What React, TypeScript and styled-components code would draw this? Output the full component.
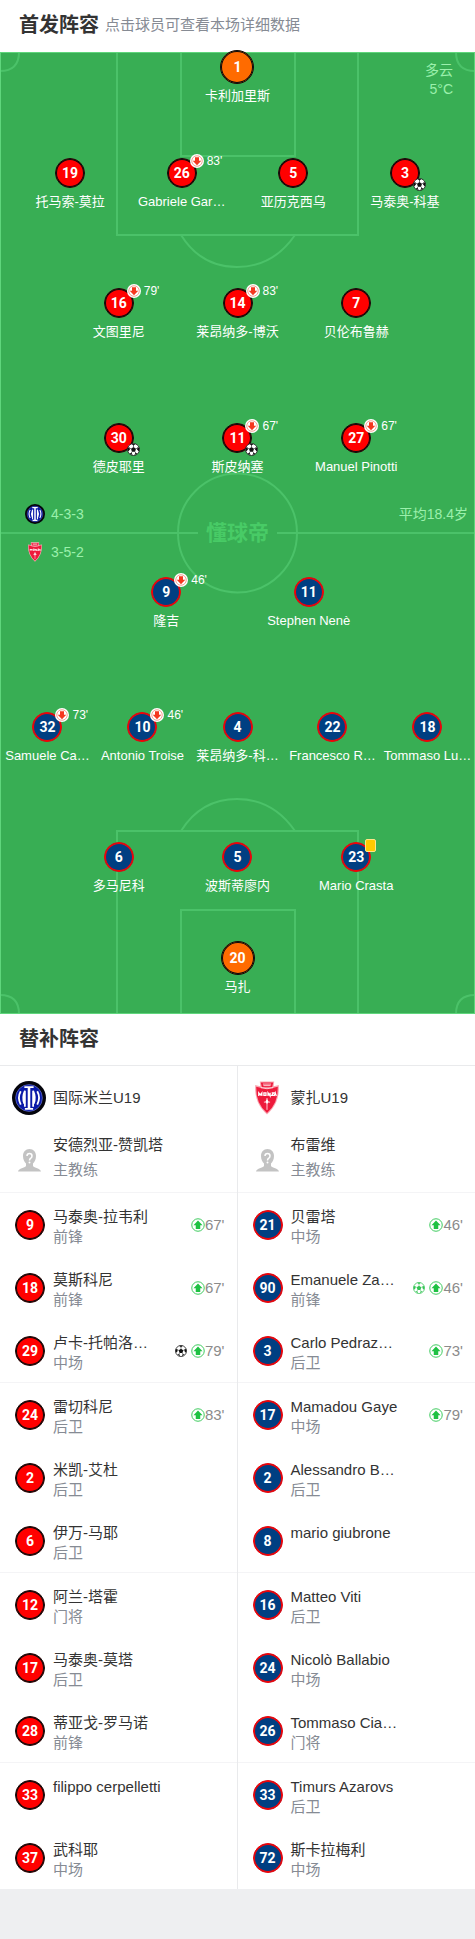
import React from 'react';
import styled, { createGlobalStyle, css } from 'styled-components';

const Global = createGlobalStyle`
  *, *::before, *::after { box-sizing: border-box; }
  body {
    margin: 0;
    background: #eeeff1;
    font-family: "Liberation Sans", "Noto Sans CJK SC", sans-serif;
    color: #333;
  }
  h2, p, ul { margin: 0; padding: 0; }
  ul { list-style: none; }
`;

type Kit = 'keeper' | 'home' | 'away';
type Player = {
  no: number;
  name: string;
  kit: Kit;
  off?: string;
  goal?: boolean;
  card?: boolean;
};
type Sub = {
  no: number;
  name: string;
  role?: string;
  on?: string;
  goal?: 'black' | 'green';
};

const kits: Record<Kit, { fill: string; line: string }> = {
  keeper: { fill: '#ff6b00', line: '#0b0b0b' },
  home: { fill: '#ff0000', line: '#0b0b0b' },
  away: { fill: '#003f82', line: '#ff0000' },
};

/* ---------- layout ---------- */

const Page = styled.main`
  width: 100%;
  padding-bottom: 50px;
`;

const Header = styled.header<{ $line?: boolean }>`
  display: flex;
  align-items: center;
  gap: 6px;
  height: 52px;
  padding: 0 19px 2px;
  background: #fff;
  border-bottom: ${(p) => (p.$line ? '1px solid #e9eaec' : '0')};
`;

const Title = styled.h2`
  font-size: 20px;
  line-height: 28px;
  font-weight: 700;
`;

const Hint = styled.span`
  font-size: 15px;
  line-height: 20px;
  color: #868b94;
`;

const Pitch = styled.section`
  position: relative;
  padding-bottom: 19px;
  background: #38ae54;
`;

const Markings = styled.svg`
  position: absolute;
  inset: 0;
  width: 100%;
  height: 100%;
`;

const Weather = styled.div`
  position: absolute;
  top: 9px;
  right: 22px;
  font-size: 14px;
  line-height: 19px;
  text-align: right;
  color: #9bf0ac;
`;

const Lines = styled.div`
  position: relative;
  display: flex;
  flex-direction: column;
`;

const Line = styled.ul<{ $count: number; $inset: string; $gap: number }>`
  display: grid;
  grid-template-columns: repeat(${(p) => p.$count}, minmax(0, 1fr));
  padding: 0 ${(p) => p.$inset};
  margin-top: ${(p) => p.$gap}px;
`;

const Spot = styled.li`
  display: flex;
  justify-content: center;
`;

const PlayerButton = styled.button`
  display: flex;
  flex-direction: column;
  align-items: center;
  gap: 6px;
  padding: 0;
  border: 0;
  background: none;
  font: inherit;
  color: #fff;
  cursor: pointer;
`;

const PlayerName = styled.span`
  font-size: 13px;
  line-height: 16px;
  white-space: nowrap;
`;

const ShirtWrap = styled.span`
  position: relative;
  flex: none;
`;

const Shirt = styled.span<{ $kit: Kit }>`
  display: flex;
  align-items: center;
  justify-content: center;
  width: 30px;
  height: 30px;
  border-radius: 50%;
  border: 1px solid ${(p) => kits[p.$kit].line};
  box-shadow: inset 0 0 0 1px ${(p) => kits[p.$kit].line};
  background: ${(p) => kits[p.$kit].fill};
  font-family: Roboto, "Liberation Sans", sans-serif;
  font-size: 14px;
  line-height: 16px;
  font-weight: 700;
  color: #fff;
  ${(p) =>
    p.$kit === 'keeper' &&
    css`
      width: 34px;
      height: 34px;
      margin-bottom: -2px;
    `}
`;

const OffBadge = styled.span`
  position: absolute;
  left: 23px;
  top: -4px;
  display: flex;
  align-items: center;
  gap: 3px;
  font-size: 12px;
  line-height: 14px;
`;

const GoalBadge = styled.span`
  position: absolute;
  left: 23px;
  top: 20px;
  display: flex;
`;

const CardBadge = styled.span`
  position: absolute;
  left: 24px;
  top: -3px;
  width: 11px;
  height: 13px;
  border: 1px solid #ffe58a;
  border-radius: 2px;
  background: #ffca00;
`;

const Midfield = styled.div`
  display: grid;
  grid-template-columns: 1fr auto 1fr;
  align-items: start;
  padding: 29px 7px 0 25px;
  margin-bottom: 15px;
  font-size: 14px;
  line-height: 20px;
  color: #9bf0ac;
`;

const Formations = styled.div`
  display: flex;
  flex-direction: column;
  gap: 18px;
`;

const Formation = styled.div`
  display: flex;
  align-items: center;
  gap: 6px;
`;

const Brand = styled.strong`
  align-self: center;
  margin-right: 18px;
  font-size: 21px;
  line-height: 30px;
  color: #48cb66;
`;

const Age = styled.span`
  text-align: right;
`;

const Bench = styled.section`
  display: grid;
  grid-template-columns: repeat(2, minmax(0, 1fr));
  background: #fff;
`;

const Team = styled.div`
  &:first-child {
    border-right: 1px solid #e9eaec;
  }
`;

const TeamHead = styled.div`
  display: flex;
  align-items: center;
  gap: 7px;
  height: 63px;
  padding-left: 12px;
  font-size: 15px;
  line-height: 20px;
`;

const Coach = styled.div`
  display: flex;
  gap: 11px;
  height: 64px;
  padding: 3px 0 0 17px;
  border-bottom: 1px solid #f4f4f6;
  font-size: 15px;
  line-height: 25px;

  svg { margin-top: 16px; }
`;

const Role = styled.p`
  color: #868b94;
`;

const SubRow = styled.li`
  display: flex;
  align-items: center;
  gap: 8px;
  height: 63px;
  padding: 0 12px 0 15px;
  font-size: 15px;
  line-height: 20px;

  &:nth-child(3n) {
    height: 64px;
    border-bottom: 1px solid #f4f4f6;
  }
`;

const SubText = styled.div`
  flex: 1;
  min-width: 0;
  height: 40px;
  margin-top: 4px;
  white-space: nowrap;
`;

const SubEvents = styled.span`
  display: flex;
  align-items: center;
  color: #8b8b8b;

  svg + svg { margin-left: 4px; }
`;

/* ---------- drawings ---------- */

const Ball = ({ size, color = '#111' }: { size: number; color?: string }) => (
  <svg width={size} height={size} viewBox="0 0 26 26" aria-hidden="true">
    <circle cx="13" cy="13" r="12" fill="#fff" stroke={color} strokeWidth="1.6" />
    <path
      fill={color}
      d="M13 8l5 3.6-1.9 5.9H9.9L8 11.6zM9 1.8h8L13 5zM1.2 10.5L4.2 8l1.8 5-3.8 4zM24.8 10.5L21.8 8 20 13l3.8 4zM5 20.5l4.5-.5 1.5 4.5zM21 20.5l-4.5-.5-1.5 4.5z"
    />
    <path
      stroke={color}
      strokeWidth="1.2"
      d="M13 8V4M18 11.6l4-2M16 17.5l2.5 4M10 17.5l-2.5 4M8 11.6l-4-2"
    />
  </svg>
);

const OffIcon = () => (
  <svg width="14" height="14" viewBox="0 0 28 28" aria-hidden="true">
    <circle cx="14" cy="14" r="14" fill="#fff" />
    <circle cx="14" cy="14" r="10.5" fill="none" stroke="#f58a78" strokeWidth="1.6" />
    <path fill="#f5371f" d="M10 6.500h8v7h4.500L14 22.500 5.500 13.500H10z" />
  </svg>
);

const OnIcon = () => (
  <svg width="14" height="14" viewBox="0 0 28 28" aria-hidden="true">
    <circle cx="14" cy="14" r="12.500" fill="#fff" stroke="#3fcb5f" strokeWidth="2" />
    <path fill="#1fc143" d="M9.500 22h9v-7.500H23L14 5l-9 9.500h4.500z" />
  </svg>
);

const InterCrest = ({ size }: { size: number }) => (
  <svg width={size} height={size} viewBox="0 0 66 66" aria-hidden="true">
    <circle cx="33" cy="33" r="33" fill="#04040c" />
    <circle cx="33" cy="33" r="26" fill="#0a1aa8" stroke="#8d97e0" strokeWidth="1" />
    <g fill="none" stroke="#fff">
      <path strokeWidth="5" d="M33 13v40" />
      <path strokeWidth="3.5" d="M24 12h18M25 54h16" />
      <path strokeWidth="3.5" d="M17 20q-7 12 0 26M49 20q7 12 0 26" />
      <path strokeWidth="3.5" d="M25 50V19q-6 13-1 25M41 50V19q6 13 1 25" />
    </g>
  </svg>
);

const MonzaCrest = ({ size }: { size: number }) => (
  <svg width={size} height={size} viewBox="0 0 66 66" aria-hidden="true">
    <path fill="#f9a9b4" d="M19 1h28l-1 9 10-2q2 36-23 57Q8 44 10 8l10 2z" />
    <path fill="#ee1a3b" d="M21 3h24l-2 9H23z" />
    <path fill="#ee1a3b" d="M12 11q21 6 42 0 1 32-21 51Q11 43 12 11z" />
    <path stroke="#fff" strokeWidth="1.5" fill="none" d="M25 6h16M26 9h14M21 13q12 4 24 0" />
    <path
      stroke="#fff"
      strokeWidth="2.5"
      fill="none"
      d="M17 29v-6l3 4 3-4v6M27 23h4v5h-4zM35 29v-6l4 6v-6M42 23h4l-4 5h4M47 29l2-6 2 6"
    />
    <path stroke="#fff" strokeWidth="1.5" fill="none" d="M33 33v23M27 41h12" />
    <path fill="#fff" d="M33 35l3 5-3 5-3-5z" />
  </svg>
);

const CoachIcon = () => (
  <svg width="25" height="25" viewBox="0 0 50 50" aria-hidden="true">
    <path
      fill="#c3c3c3"
      d="M25 2c8 0 13 6 13 14 0 7-3 12-6 15v5c3 4 14 4 16 11H2c2-7 13-7 16-11v-5c-3-3-6-8-6-15C12 8 17 2 25 2z"
    />
    <path fill="none" stroke="#fff" strokeWidth="3" d="M20 16q0-5 5-5t5 5q0 3-3 5-2 1-2 4" />
    <circle cx="25" cy="29" r="2" fill="#fff" />
  </svg>
);

const PitchMarkings = () => (
  <Markings viewBox="0 0 475 962" preserveAspectRatio="none" aria-hidden="true">
    <g fill="none" stroke="#4bc269" strokeWidth="2">
      <path d="M117 0v183h241V0M181 0v104h114V0M181 183q20 32 56 32t58-32" />
      <path d="M117 962V779h241v183M181 962V858h114v104M181 779q20-32 56-32t58 32" />
      <circle cx="237.5" cy="481" r="59.5" />
      <path d="M0 481h198M277 481h198" />
      <path d="M19 0q0 19-19 19M456 0q0 19 19 19M19 962q0-19-19-19M456 962q0-19 19-19" />
    </g>
    <rect x="0.5" y="0.5" width="474" height="961" fill="none" stroke="#5fd67c" />
  </Markings>
);

/* ---------- data ---------- */

const homeLines: Player[][] = [
  [{ no: 1, name: '卡利加里斯', kit: 'keeper' }],
  [
    { no: 19, name: '托马索-莫拉', kit: 'home' },
    { no: 26, name: 'Gabriele Gar…', kit: 'home', off: "83'" },
    { no: 5, name: '亚历克西乌', kit: 'home' },
    { no: 3, name: '马泰奥-科基', kit: 'home', goal: true },
  ],
  [
    { no: 16, name: '文图里尼', kit: 'home', off: "79'" },
    { no: 14, name: '莱昂纳多-博沃', kit: 'home', off: "83'" },
    { no: 7, name: '贝伦布鲁赫', kit: 'home' },
  ],
  [
    { no: 30, name: '德皮耶里', kit: 'home', goal: true },
    { no: 11, name: '斯皮纳塞', kit: 'home', off: "67'", goal: true },
    { no: 27, name: 'Manuel Pinotti', kit: 'home', off: "67'" },
  ],
];

const awayLines: Player[][] = [
  [
    { no: 9, name: '隆吉', kit: 'away', off: "46'" },
    { no: 11, name: 'Stephen Nenè', kit: 'away' },
  ],
  [
    { no: 32, name: 'Samuele Ca…', kit: 'away', off: "73'" },
    { no: 10, name: 'Antonio Troise', kit: 'away', off: "46'" },
    { no: 4, name: '莱昂纳多-科…', kit: 'away' },
    { no: 22, name: 'Francesco R…', kit: 'away' },
    { no: 18, name: 'Tommaso Lu…', kit: 'away' },
  ],
  [
    { no: 6, name: '多马尼科', kit: 'away' },
    { no: 5, name: '波斯蒂廖内', kit: 'away' },
    { no: 23, name: 'Mario Crasta', kit: 'away', card: true },
  ],
  [{ no: 20, name: '马扎', kit: 'keeper' }],
];

const homeSubs: Sub[] = [
  { no: 9, name: '马泰奥-拉韦利', role: '前锋', on: "67'" },
  { no: 18, name: '莫斯科尼', role: '前锋', on: "67'" },
  { no: 29, name: '卢卡-托帕洛…', role: '中场', on: "79'", goal: 'black' },
  { no: 24, name: '雷切科尼', role: '后卫', on: "83'" },
  { no: 2, name: '米凯-艾杜', role: '后卫' },
  { no: 6, name: '伊万-马耶', role: '后卫' },
  { no: 12, name: '阿兰-塔霍', role: '门将' },
  { no: 17, name: '马泰奥-莫塔', role: '后卫' },
  { no: 28, name: '蒂亚戈-罗马诺', role: '前锋' },
  { no: 33, name: 'filippo cerpelletti' },
  { no: 37, name: '武科耶', role: '中场' },
];

const awaySubs: Sub[] = [
  { no: 21, name: '贝雷塔', role: '中场', on: "46'" },
  { no: 90, name: 'Emanuele Za…', role: '前锋', on: "46'", goal: 'green' },
  { no: 3, name: 'Carlo Pedraz…', role: '后卫', on: "73'" },
  { no: 17, name: 'Mamadou Gaye', role: '中场', on: "79'" },
  { no: 2, name: 'Alessandro B…', role: '后卫' },
  { no: 8, name: 'mario giubrone' },
  { no: 16, name: 'Matteo Viti', role: '后卫' },
  { no: 24, name: 'Nicolò Ballabio', role: '中场' },
  { no: 26, name: 'Tommaso Cia…', role: '门将' },
  { no: 33, name: 'Timurs Azarovs', role: '后卫' },
  { no: 72, name: '斯卡拉梅利', role: '中场' },
];

const insets: Record<number, string> = { 1: '0', 2: '20%', 3: '12.5%', 4: '3%', 5: '0' };

/* ---------- parts ---------- */

const PlayerLine = ({ players, gap }: { players: Player[]; gap: number }) => (
  <Line $count={players.length} $inset={insets[players.length]} $gap={gap}>
    {players.map((p) => (
      <Spot key={p.no}>
        <PlayerButton type="button">
          <ShirtWrap>
            <Shirt $kit={p.kit}>{p.no}</Shirt>
            {p.off && (
              <OffBadge>
                <OffIcon />
                {p.off}
              </OffBadge>
            )}
            {p.goal && (
              <GoalBadge>
                <Ball size={13} />
              </GoalBadge>
            )}
            {p.card && <CardBadge />}
          </ShirtWrap>
          <PlayerName>{p.name}</PlayerName>
        </PlayerButton>
      </Spot>
    ))}
  </Line>
);

const TeamBench = ({
  crest,
  team,
  coach,
  kit,
  subs,
}: {
  crest: React.ReactNode;
  team: string;
  coach: string;
  kit: Kit;
  subs: Sub[];
}) => (
  <Team>
    <TeamHead>
      {crest}
      {team}
    </TeamHead>
    <Coach>
      <CoachIcon />
      <div>
        <p>{coach}</p>
        <Role>主教练</Role>
      </div>
    </Coach>
    <ul>
      {subs.map((s) => (
        <SubRow key={s.no}>
          <Shirt $kit={kit}>{s.no}</Shirt>
          <SubText>
            <p>{s.name}</p>
            {s.role && <Role>{s.role}</Role>}
          </SubText>
          {s.on && (
            <SubEvents>
              {s.goal && <Ball size={12} color={s.goal === 'green' ? '#35c455' : '#111'} />}
              <OnIcon />
              {s.on}
            </SubEvents>
          )}
        </SubRow>
      ))}
    </ul>
  </Team>
);

const homeGaps = [-2, 54, 78, 83];
const awayGaps = [0, 83, 78, 47];

export default function App() {
  return (
    <Page>
      <Global />
      <Header>
        <Title>首发阵容</Title>
        <Hint>点击球员可查看本场详细数据</Hint>
      </Header>
      <Pitch>
        <PitchMarkings />
        <Lines>
          {homeLines.map((players, i) => (
            <PlayerLine key={i} players={players} gap={homeGaps[i]} />
          ))}
          <Midfield>
            <Formations>
              <Formation>
                <InterCrest size={20} />
                4-3-3
              </Formation>
              <Formation>
                <MonzaCrest size={20} />
                3-5-2
              </Formation>
            </Formations>
            <Brand>懂球帝</Brand>
            <Age>平均18.4岁</Age>
          </Midfield>
          {awayLines.map((players, i) => (
            <PlayerLine key={i} players={players} gap={awayGaps[i]} />
          ))}
        </Lines>
        <Weather>
          <p>多云</p>
          <p>5°C</p>
        </Weather>
      </Pitch>
      <Header $line>
        <Title>替补阵容</Title>
      </Header>
      <Bench>
        <TeamBench
          crest={<InterCrest size={34} />}
          team="国际米兰U19"
          coach="安德烈亚-赞凯塔"
          kit="home"
          subs={homeSubs}
        />
        <TeamBench
          crest={<MonzaCrest size={34} />}
          team="蒙扎U19"
          coach="布雷维"
          kit="away"
          subs={awaySubs}
        />
      </Bench>
    </Page>
  );
}
